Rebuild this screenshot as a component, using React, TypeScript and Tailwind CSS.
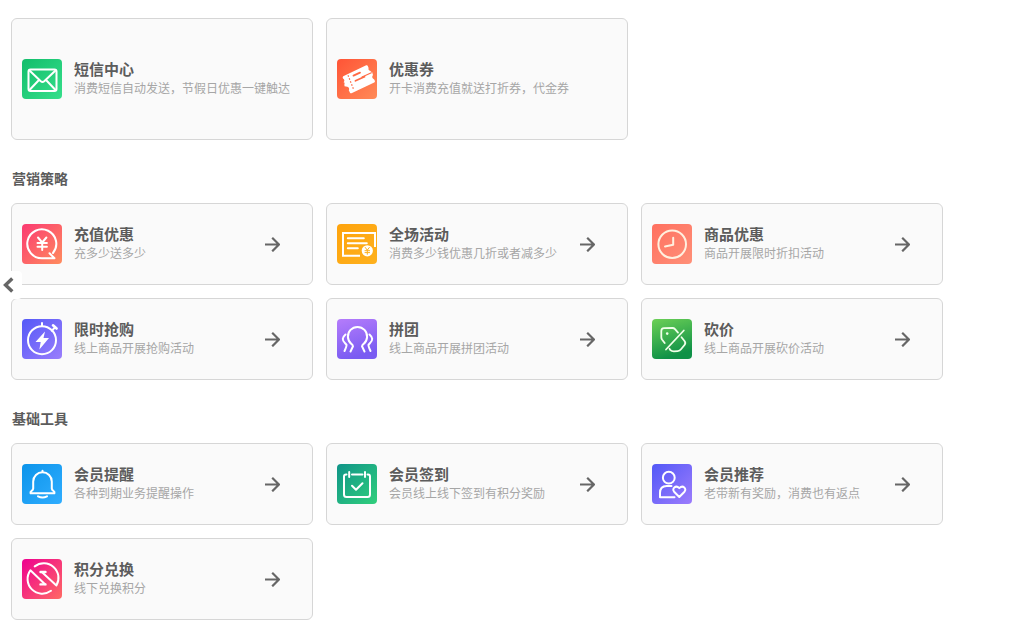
import { ReactNode } from "react";
import clsx from "clsx";

interface Tool {
  title: string;
  desc: string;
  colors: [string, string];
  // direction of the tile gradient
  vertical?: boolean;
  glyph: ReactNode;
}

interface Section {
  id: string;
  name?: string;
  tall?: boolean;
  items: Tool[];
}

const sections: Section[] = [
  {
    id: "message",
    tall: true,
    items: [
      {
        title: "短信中心",
        desc: "消费短信自动发送，节假日优惠一键触达",
        colors: ["#12bd6b", "#36df8b"],
        glyph: (
          <>
            <rect x="6.5" y="10.5" width="28" height="21.5" rx="2" />
            <path d="M7.5 11.5 18.8 22.2q1.7 1.5 3.4 0L33.5 11.5M7.5 31 16.5 21.5M33.5 31 24.5 21.5" />
          </>
        ),
      },
      {
        title: "优惠券",
        desc: "开卡消费充值就送打折券，代金券",
        colors: ["#ff5436", "#ff8a57"],
        glyph: (
          <>
            <path
              d="M6.2 17.2 29.2 6.3q1-.4 1.5.5l.9 2.2q-.7 2.4 1.9 2.9l.9 1.6L9.2 24.8l-2.6-1.6q1.8-2.2-.6-3.8-.8-1.5.2-2.2z"
              fill="#fff"
              stroke="none"
            />
            <path
              d="M8.2 23.2 35 12.7l1 3.4q-2 2.6 1.2 4.4l.7 1.4q.2 1-.7 1.5L14.5 34.2q-1 .4-1.5-.5l-1.2-2.4q1.2-2.6-1.5-3.6l-2.8-.5q-.6-2.8.7-4z"
              fill="#fff"
              stroke="none"
            />
            <path d="m25 18 9.4-4.3" stroke="#ff6a44" strokeWidth="1.1" />
            <path d="m11 16.3 5.6 14" stroke="#ff6a44" strokeWidth="1.2" strokeDasharray="1.6 1.6" strokeLinecap="butt" />
            <path d="m16.5 16.6 6.5-3M18.5 21.8l9-4" stroke="#ff6a44" strokeWidth="1.8" />
          </>
        ),
      },
    ],
  },
  {
    id: "strategy",
    name: "营销策略",
    items: [
      {
        title: "充值优惠",
        desc: "充多少送多少",
        colors: ["#fb3a72", "#ff8c5e"],
        glyph: (
          <>
            <path d="M31 29A14.5 14.5 0 1 0 20 34.3h12.5l-5-5" />
            <path d="m16 13.5 4.2 5 4.2-5M20.2 18.5V26M15.5 19h9.4M15.5 22.7h9.4" />
          </>
        ),
      },
      {
        title: "全场活动",
        desc: "消费多少钱优惠几折或者减多少",
        colors: ["#fea30c", "#feb11e"],
        glyph: (
          <>
            <path d="M23 31.8H6V9h32v14" strokeLinejoin="miter" strokeLinecap="butt" />
            <path d="M10.8 14.2h16M10.8 19.3h19M10.8 24.3h10" />
            <circle cx="30.3" cy="26.8" r="5.6" fill="#fff" stroke="none" />
            <path d="m28.3 23.5 2 2.7 2-2.7M30.3 26v4.3M28 26.7h4.6M28 28.6h4.6" stroke="#feb11e" strokeWidth="1" />
          </>
        ),
      },
      {
        title: "商品优惠",
        desc: "商品开展限时折扣活动",
        colors: ["#ff7060", "#ff9078"],
        glyph: (
          <g stroke="#fff0df">
            <circle cx="20.2" cy="20.2" r="13.8" />
            <path d="M21.2 13.8v7L13 22.5" />
          </g>
        ),
      },
      {
        title: "限时抢购",
        desc: "线上商品开展抢购活动",
        colors: ["#5459f7", "#9a7efc"],
        glyph: (
          <>
            <circle cx="20" cy="21.2" r="14" />
            <path d="M20 7V4M29.8 11.8l3-3.2" />
            <path d="m31 6.3 3.6 3.2" strokeWidth="2.6" />
            <path d="M23 12.5 13.5 23h5.2l-1.3 7.5L27 19h-5.5z" fill="#fff" stroke="none" />
          </>
        ),
      },
      {
        title: "拼团",
        desc: "线上商品开展拼团活动",
        colors: ["#b57cfb", "#7a5cf2"],
        vertical: true,
        glyph: (
          <>
            <path d="M13.5 32.5 16 27.3q-.2-1.4-1.6-2.4a9.6 9.6 0 1 1 12.2 0q-1.4 1-1.6 2.4l2.5 5.2" />
            <path d="M8.5 15.5q-5.2 4.4-.4 8.8l1.4 1.5q.3 1.4-2 6.2M32.5 15.5q5.2 4.4.4 8.8l-1.4 1.5q-.3 1.4 2 6.2" />
          </>
        ),
      },
      {
        title: "砍价",
        desc: "线上商品开展砍价活动",
        colors: ["#6cd056", "#0f9147"],
        vertical: true,
        glyph: (
          <g strokeWidth="1.8" stroke="#efffe8">
            <path d="M12.7 24 10 20.5q-.7-1-.7-2.5v-6q0-2.7 2.7-2.8l8.5-.2q1.5 0 2.5 1.1l3 3.5" />
            <path d="M31.8 11.5 14 30.5" />
            <path d="m29.5 18.3 3 3.7q1.6 2 0 4l-3.5 4.3q-1.2 1.7-3.3 1.8l-3.8.3q-2.3 0-3.5-1.2l-.9-1.4" />
            <circle cx="15.2" cy="14.6" r="1.3" fill="#efffe8" stroke="none" />
          </g>
        ),
      },
    ],
  },
  {
    id: "basic",
    name: "基础工具",
    items: [
      {
        title: "会员提醒",
        desc: "各种到期业务提醒操作",
        colors: ["#0c94ea", "#30adff"],
        glyph: (
          <>
            <path d="M20.5 8.2V6.8M11.2 24.5v-7a9.3 9.3 0 0 1 18.6 0v7q.2 1.5 1.6 2.3 1.6 1 1 2.5H8.6q-.6-1.5 1-2.5 1.4-.8 1.6-2.3z" />
            <path d="M16 32.3q4.5 2.4 9 0" />
          </>
        ),
      },
      {
        title: "会员签到",
        desc: "会员线上线下签到有积分奖励",
        colors: ["#0f9488", "#31cf7c"],
        glyph: (
          <>
            <path d="M9.5 10.5H9q-2 0-2 2v18q0 2.5 2.5 2.5h21q2.5 0 2.5-2.5v-18q0-2-2-2h-.5M15 10.5h10.5" />
            <path d="M12.2 8v5M28 8v5M15 21.7l4 4 6.5-6.5" />
          </>
        ),
      },
      {
        title: "会员推荐",
        desc: "老带新有奖励，消费也有返点",
        colors: ["#5258f7", "#9c7cfc"],
        glyph: (
          <>
            <circle cx="16.8" cy="13.7" r="5.9" />
            <path d="M19.5 22h-4.8Q8 22 8 29v4.2h14.5" />
            <path d="m27.3 33-5.2-5.3c-2.6-3 1.5-7.2 5.2-3.6 3.7-3.6 7.8.6 5.2 3.6z" />
          </>
        ),
      },
      {
        title: "积分兑换",
        desc: "线下兑换积分",
        colors: ["#ee0090", "#ff6a64"],
        glyph: (
          <>
            <path d="M12.7 7.4A14.7 14.7 0 0 1 34.4 26.5L19.8 13" />
            <path d="M29 31.8A14.7 14.7 0 0 1 8.4 11.3L23 25.2" />
            <path d="M18.5 13h5M18.5 25.4h5" strokeWidth="2.4" />
          </>
        ),
      },
    ],
  },
];

function ToolIcon({ id, tool }: { id: string; tool: Tool }) {
  return (
    <svg className="size-10 shrink-0" viewBox="0 0 40 40" aria-hidden="true">
      <defs>
        <linearGradient id={id} x1="0" y1="0" x2={tool.vertical ? "0.3" : "1"} y2="1">
          <stop offset="0" stopColor={tool.colors[0]} />
          <stop offset="1" stopColor={tool.colors[1]} />
        </linearGradient>
      </defs>
      <rect width="40" height="40" rx="4" fill={`url(#${id})`} />
      <g fill="none" stroke="#fff" strokeWidth="2" strokeLinecap="round" strokeLinejoin="round">
        {tool.glyph}
      </g>
    </svg>
  );
}

function ToolCard({ id, tool, tall }: { id: string; tool: Tool; tall?: boolean }) {
  return (
    <a
      href={`#${id}`}
      className={clsx(
        "flex w-[302px] max-w-full items-center rounded-md border border-[#d6d6d6] bg-[#fafafa] pl-2.5 hover:shadow-md",
        tall ? "h-[122px] pr-2.5" : "h-[82px] pr-8"
      )}
    >
      <ToolIcon id={id} tool={tool} />
      <div className="ml-3 min-w-0 flex-1">
        <h3 className="text-[15px] leading-5 font-bold text-[#5c5c5c]">{tool.title}</h3>
        <p className="text-xs leading-[18px] whitespace-nowrap text-[#a6a6a6]">{tool.desc}</p>
      </div>
      {!tall && (
        <svg
          className="size-4 shrink-0 text-[#666]"
          viewBox="0 0 16 16"
          fill="none"
          stroke="currentColor"
          strokeWidth="2.2"
          aria-hidden="true"
        >
          <path d="M1 8.5h14M8.2 1.7 15 8.5l-6.8 6.8" />
        </svg>
      )}
    </a>
  );
}

export default function App() {
  return (
    <div className="relative min-h-screen bg-white pt-[18px] pb-[3px] pl-[11px] font-['Liberation_Sans','Noto_Sans_CJK_SC',sans-serif]">
      {sections.map((section) => (
        <section key={section.id} className="mb-[29px] last-of-type:mb-0">
          {section.name && (
            <h2 className="mb-[14px] pl-px text-sm leading-5 font-bold text-[#5c5c5c]">{section.name}</h2>
          )}
          <div className="flex flex-wrap gap-[13px]">
            {section.items.map((tool, index) => (
              <ToolCard key={tool.title} id={`${section.id}-${index}`} tool={tool} tall={section.tall} />
            ))}
          </div>
        </section>
      ))}

      {/* Handle that folds the side menu */}
      <button
        type="button"
        aria-label="收起菜单"
        className="absolute top-[271px] left-0 flex h-7 w-[22px] items-center rounded-r bg-white pl-[3px] text-[#666]"
      >
        <svg className="h-4 w-3" viewBox="0 0 12 16" fill="none" stroke="currentColor" strokeWidth="3.4" aria-hidden="true">
          <path d="M9.3 1.5 2.5 8l6.8 6.5" />
        </svg>
      </button>
    </div>
  );
}
